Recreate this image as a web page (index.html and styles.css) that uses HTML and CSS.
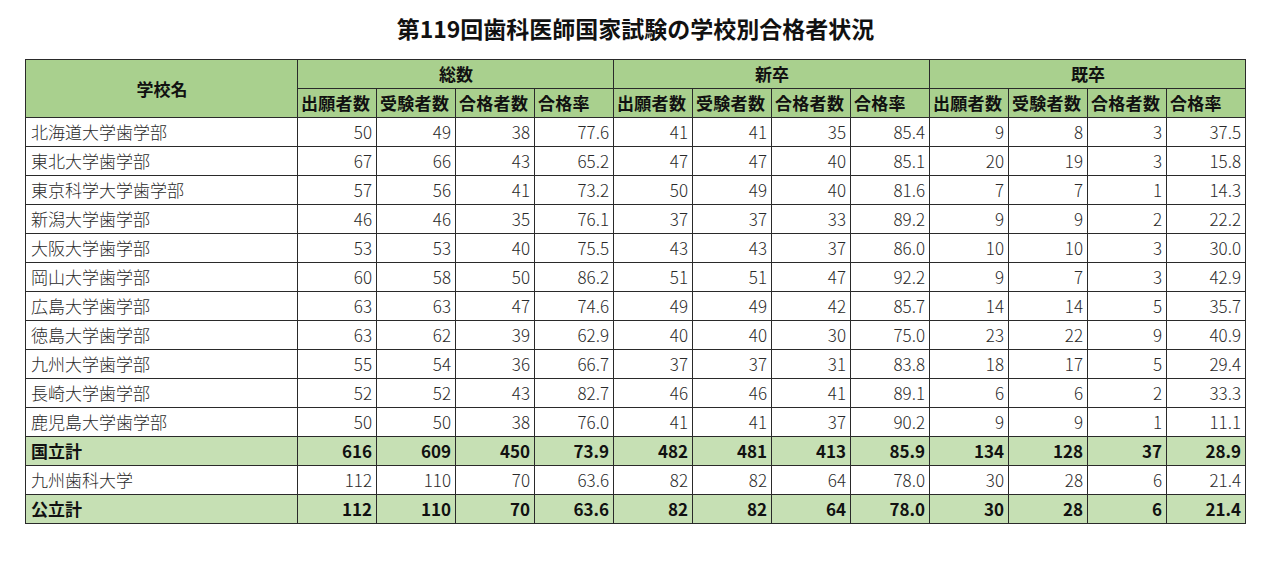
FILE: index.html
```html
<!DOCTYPE html>
<html lang="ja">
<head>
<meta charset="utf-8">
<title>第119回歯科医師国家試験の学校別合格者状況</title>
<link rel="stylesheet" href="styles.css">
</head>
<body>
<div class="page">
<h1 class="title">第119回歯科医師国家試験の学校別合格者状況</h1>
<table class="grid">
<colgroup>
<col class="c-name">
<col class="c-num"><col class="c-num"><col class="c-num"><col class="c-num">
<col class="c-num"><col class="c-num"><col class="c-num"><col class="c-num">
<col class="c-num"><col class="c-num"><col class="c-num"><col class="c-num">
</colgroup>
<thead>
<tr class="hrow">
<th rowspan="2" class="hname">学校名</th>
<th colspan="4">総数</th>
<th colspan="4">新卒</th>
<th colspan="4">既卒</th>
</tr>
<tr class="hrow">
<th>出願者数</th><th>受験者数</th><th>合格者数</th><th>合格率</th>
<th>出願者数</th><th>受験者数</th><th>合格者数</th><th>合格率</th>
<th>出願者数</th><th>受験者数</th><th>合格者数</th><th>合格率</th>
</tr>
</thead>
<tbody>
<tr><td class="name">北海道大学歯学部</td><td>50</td><td>49</td><td>38</td><td>77.6</td><td>41</td><td>41</td><td>35</td><td>85.4</td><td>9</td><td>8</td><td>3</td><td>37.5</td></tr>
<tr><td class="name">東北大学歯学部</td><td>67</td><td>66</td><td>43</td><td>65.2</td><td>47</td><td>47</td><td>40</td><td>85.1</td><td>20</td><td>19</td><td>3</td><td>15.8</td></tr>
<tr><td class="name">東京科学大学歯学部</td><td>57</td><td>56</td><td>41</td><td>73.2</td><td>50</td><td>49</td><td>40</td><td>81.6</td><td>7</td><td>7</td><td>1</td><td>14.3</td></tr>
<tr><td class="name">新潟大学歯学部</td><td>46</td><td>46</td><td>35</td><td>76.1</td><td>37</td><td>37</td><td>33</td><td>89.2</td><td>9</td><td>9</td><td>2</td><td>22.2</td></tr>
<tr><td class="name">大阪大学歯学部</td><td>53</td><td>53</td><td>40</td><td>75.5</td><td>43</td><td>43</td><td>37</td><td>86.0</td><td>10</td><td>10</td><td>3</td><td>30.0</td></tr>
<tr><td class="name">岡山大学歯学部</td><td>60</td><td>58</td><td>50</td><td>86.2</td><td>51</td><td>51</td><td>47</td><td>92.2</td><td>9</td><td>7</td><td>3</td><td>42.9</td></tr>
<tr><td class="name">広島大学歯学部</td><td>63</td><td>63</td><td>47</td><td>74.6</td><td>49</td><td>49</td><td>42</td><td>85.7</td><td>14</td><td>14</td><td>5</td><td>35.7</td></tr>
<tr><td class="name">徳島大学歯学部</td><td>63</td><td>62</td><td>39</td><td>62.9</td><td>40</td><td>40</td><td>30</td><td>75.0</td><td>23</td><td>22</td><td>9</td><td>40.9</td></tr>
<tr><td class="name">九州大学歯学部</td><td>55</td><td>54</td><td>36</td><td>66.7</td><td>37</td><td>37</td><td>31</td><td>83.8</td><td>18</td><td>17</td><td>5</td><td>29.4</td></tr>
<tr><td class="name">長崎大学歯学部</td><td>52</td><td>52</td><td>43</td><td>82.7</td><td>46</td><td>46</td><td>41</td><td>89.1</td><td>6</td><td>6</td><td>2</td><td>33.3</td></tr>
<tr><td class="name">鹿児島大学歯学部</td><td>50</td><td>50</td><td>38</td><td>76.0</td><td>41</td><td>41</td><td>37</td><td>90.2</td><td>9</td><td>9</td><td>1</td><td>11.1</td></tr>
<tr class="total"><td class="name">国立計</td><td>616</td><td>609</td><td>450</td><td>73.9</td><td>482</td><td>481</td><td>413</td><td>85.9</td><td>134</td><td>128</td><td>37</td><td>28.9</td></tr>
<tr><td class="name">九州歯科大学</td><td>112</td><td>110</td><td>70</td><td>63.6</td><td>82</td><td>82</td><td>64</td><td>78.0</td><td>30</td><td>28</td><td>6</td><td>21.4</td></tr>
<tr class="total"><td class="name">公立計</td><td>112</td><td>110</td><td>70</td><td>63.6</td><td>82</td><td>82</td><td>64</td><td>78.0</td><td>30</td><td>28</td><td>6</td><td>21.4</td></tr>
</tbody>
</table>
</div>
</body>
</html>
```

FILE: styles.css
```css
html, body {
  margin: 0;
  padding: 0;
  background: #ffffff;
}
body {
  font-family: "Noto Sans CJK JP", "Noto Sans", sans-serif;
  color: #1a1a1a;
}
.page {
  padding: 0 0 0 25px;
}
.title {
  margin: 0;
  width: 1221px;
  height: 59px;
  line-height: 56px;
  text-align: center;
  font-size: 23px;
  font-weight: 700;
  color: #111;
}
.grid {
  border-collapse: collapse;
  table-layout: fixed;
  width: 1221px;
  font-size: 17px;
}
.c-name { width: 272px; }
.c-num { width: 79px; }
.grid th, .grid td {
  border: 1px solid #2a2a2a;
  height: 28px;
  padding: 0 4px 0 4px;
  line-height: 26px;
  white-space: nowrap;
  overflow: hidden;
}
.grid th {
  background: #a9d08e;
  font-weight: 700;
  text-align: center;
  color: #111;
}
.grid th.hname {
  vertical-align: middle;
}
.hrow th {
  padding: 0 2px 0 3px;
  text-align: left;
  letter-spacing: 0.3px;
}
.hrow th[colspan], .hrow th.hname {
  text-align: center;
  letter-spacing: 0;
}
.grid td {
  text-align: right;
  font-weight: 300;
  color: #2a2a2a;
}
.grid td.name {
  text-align: left;
  padding-left: 5px;
}
.total td {
  background: #c6e0b4;
  font-weight: 700;
  color: #111;
}
```
